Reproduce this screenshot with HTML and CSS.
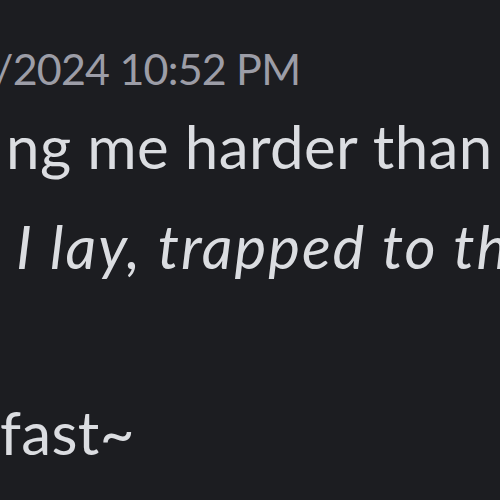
FILE: index.html
```html
<!DOCTYPE html>
<html lang="en">
<head>
    <meta charset="UTF-8">
    <title>Message</title>
    <link rel="stylesheet" href="styles.css">
</head>
<body>
<div class="message">
    <div class="stamp">/2024 10:52 PM</div>
    <div class="text">
        <p class="line first">ng me harder than</p>
        <p class="line"><em>I lay, trapped to th</em></p>
        <p class="line last">fast~</p>
    </div>
</div>
</body>
</html>
```
FILE: styles.css
```css
html, body {
    margin: 0;
    padding: 0;
    background: #1c1d21;
    overflow: hidden;
}
.message {
    width: 500px;
    height: 500px;
    overflow: hidden;
    font-family: Lato, "Noto Sans", sans-serif;
    white-space: nowrap;
}
.stamp {
    color: #9c9da7;
    font-size: 43px;
    letter-spacing: -0.8px;
    line-height: 60px;
    margin-top: 39px;
    margin-left: -6px;
}
.text {
    color: #dbdde1;
    font-size: 60px;
    letter-spacing: 0.4px;
    margin-top: -3px;
}
.line {
    margin: 0;
    line-height: 100px;
}
.first {
    margin-left: 6px;
}
.line em {
    margin-left: 16px;
    letter-spacing: 2px;
}
.last {
    margin-top: 86px;
    margin-left: 0;
}
```
